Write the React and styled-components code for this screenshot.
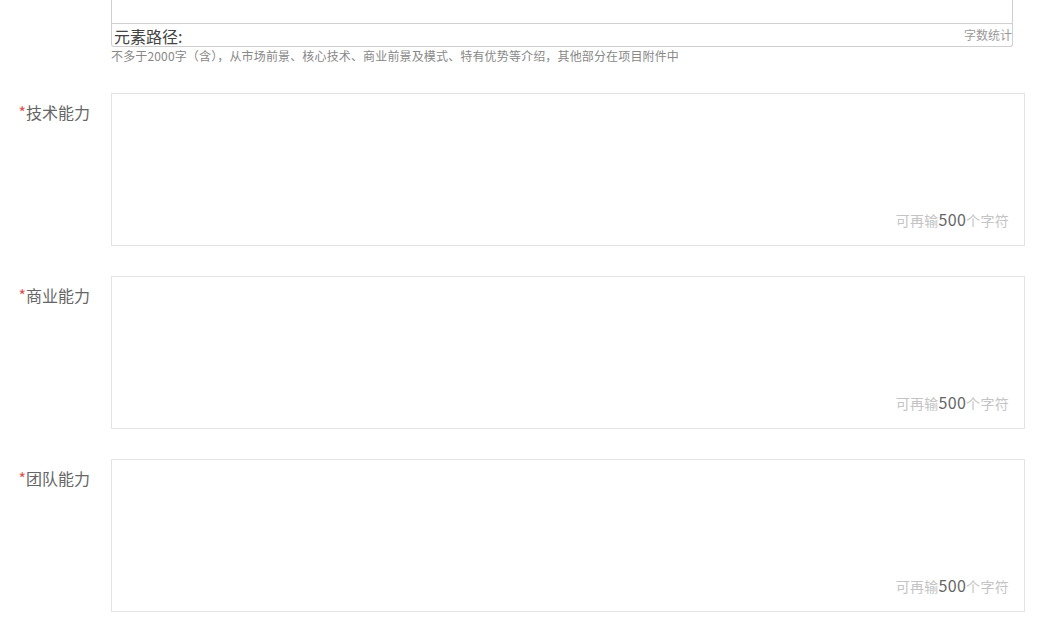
import React from 'react';
import styled, { createGlobalStyle } from 'styled-components';

const GlobalStyle = createGlobalStyle`
  html, body {
    margin: 0;
    padding: 0;
    background: #fff;
  }
  body {
    font-family: "Microsoft YaHei", "Noto Sans CJK SC", "Noto Sans", sans-serif;
    color: #666;
  }
`;

const Page = styled.div`
  width: 1064px;
  height: 618px;
  overflow: hidden;
`;

const Intro = styled.div`
  padding-left: 111px;
  width: 902px;
`;

const Editor = styled.div`
  border: 1px solid #cfcfcf;
  border-top: none;
  border-radius: 0 0 3px 3px;
`;

const EditorBody = styled.div`
  height: 23px;
  border-bottom: 1px solid #cfcfcf;
`;

const StatusBar = styled.div`
  height: 22px;
  display: flex;
  align-items: center;
  justify-content: space-between;
  padding: 0 0 0 2px;
`;

const Path = styled.span`
  font-size: 16px;
  color: #444;
  line-height: 22px;
  padding-top: 2px;
`;

const WordCount = styled.span`
  font-size: 12px;
  color: #999;
  margin-top: -2px;
`;

const Hint = styled.p`
  margin: 1px 0 0;
  font-size: 12px;
  color: #888;
  line-height: 16px;
  letter-spacing: 0.15px;
`;

const Form = styled.div`
  display: flex;
  flex-direction: column;
  gap: 30px;
  margin-top: 29px;
`;

const Row = styled.div`
  display: flex;
  align-items: flex-start;
`;

const Label = styled.label`
  width: 90px;
  flex-shrink: 0;
  margin-right: 21px;
  text-align: right;
  font-size: 16px;
  line-height: 20px;
  padding-top: 9px;
  color: #666;
`;

const Star = styled.span`
  color: #d9534f;
`;

const Box = styled.div`
  position: relative;
  width: 912px;
  height: 151px;
  border: 1px solid #e3e3e3;
`;

const Counter = styled.div`
  position: absolute;
  right: 15px;
  bottom: 15px;
  font-size: 14px;
  line-height: 20px;
  color: #c4c4c4;
  display: flex;
  align-items: baseline;
  letter-spacing: 0.3px;
`;

const Num = styled.span`
  font-size: 16px;
  color: #666;
`;

const fields = ['技术能力', '商业能力', '团队能力'];

export default function App() {
  return (
    <Page>
      <GlobalStyle />
      <Intro>
        <Editor>
          <EditorBody />
          <StatusBar>
            <Path>元素路径:</Path>
            <WordCount>字数统计</WordCount>
          </StatusBar>
        </Editor>
        <Hint>不多于2000字（含），从市场前景、核心技术、商业前景及模式、特有优势等介绍，其他部分在项目附件中</Hint>
      </Intro>
      <Form>
        {fields.map((name) => (
          <Row key={name}>
            <Label><Star>*</Star>{name}</Label>
            <Box>
              <Counter>可再输<Num>500</Num>个字符</Counter>
            </Box>
          </Row>
        ))}
      </Form>
    </Page>
  );
}
